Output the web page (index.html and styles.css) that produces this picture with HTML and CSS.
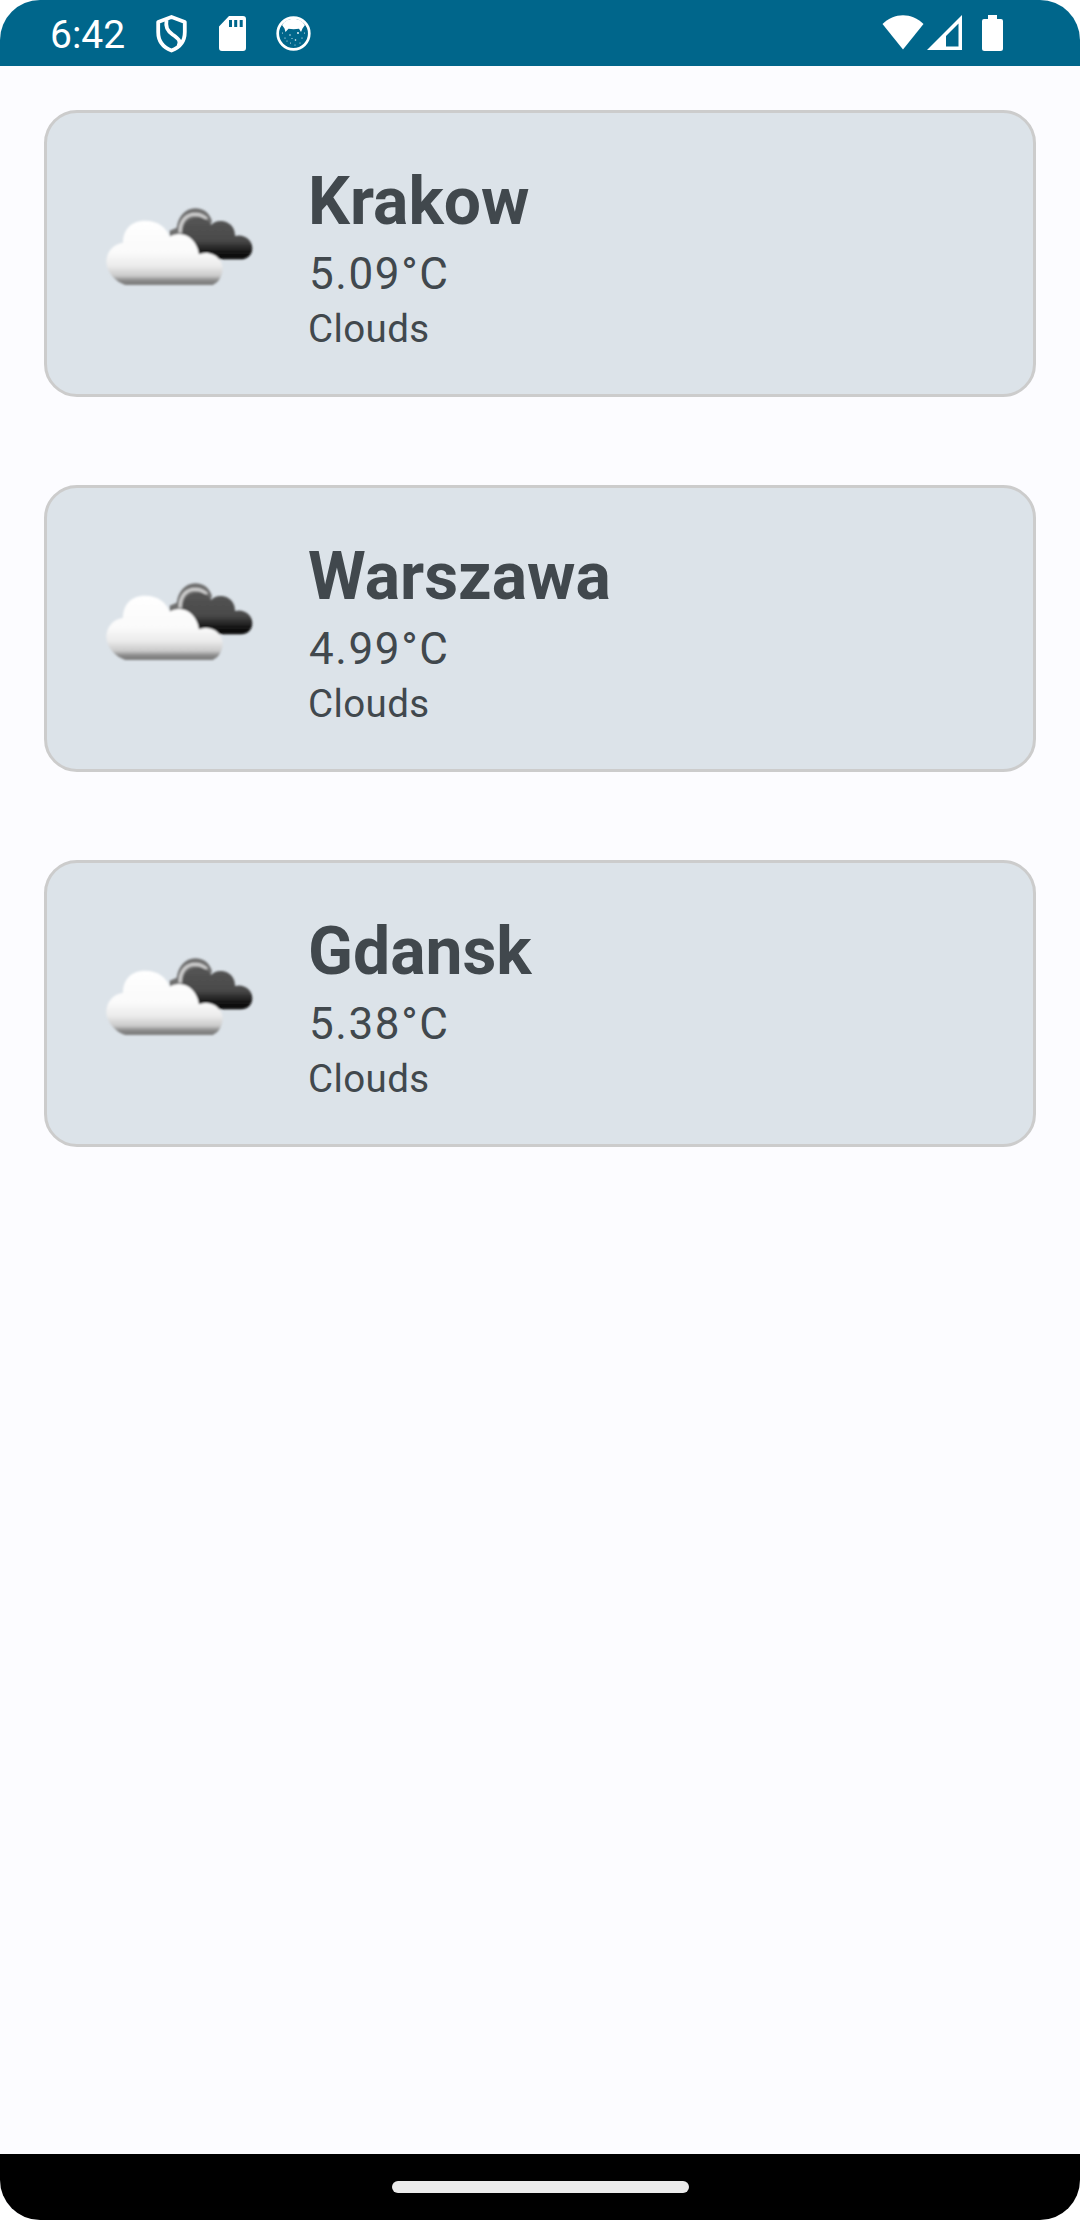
FILE: index.html
```html
<!DOCTYPE html>
<html lang="en">
<head>
<meta charset="utf-8">
<title>Weather</title>
<link rel="stylesheet" href="styles.css">
</head>
<body>
<svg class="defs" width="0" height="0" aria-hidden="true">
  <defs>
    <linearGradient id="white" x1="0" y1="90" x2="0" y2="287" gradientUnits="userSpaceOnUse">
      <stop offset="0" stop-color="#fff"/><stop offset=".5" stop-color="#fafafa"/>
      <stop offset=".7" stop-color="#ebebeb"/><stop offset=".85" stop-color="#cacaca"/>
      <stop offset=".92" stop-color="#8a8a8a"/><stop offset="1" stop-color="#777"/>
    </linearGradient>
    <linearGradient id="dark" x1="0" y1="80" x2="0" y2="210" gradientUnits="userSpaceOnUse">
      <stop offset="0" stop-color="#555"/><stop offset=".55" stop-color="#4a4a4a"/>
      <stop offset=".8" stop-color="#181818"/><stop offset="1" stop-color="#000"/>
    </linearGradient>
    <filter id="soft" x="-10%" y="-10%" width="120%" height="120%"><feGaussianBlur stdDeviation="3"/></filter>
    <symbol id="clouds" viewBox="0 0 540 330">
      <g filter="url(#soft)">
        <path d="M239 137V122L260 113C265 78 286 56 315 55C342 55 360 71 366 94L350 130L290 180Z" fill="#707070"/>
        <path d="M270 128C270 94 288 73 315 73C330 73 342 78 350 88" fill="none" stroke="#ccc" stroke-width="10"/>
        <path d="M278 130C278 98 296 83 323 83C344 83 357 91 363 105C373 94 386 91 401 94C423 99 436 117 435 138C459 131 487 147 487 174C487 194 473 208 452 208H330L278 160Z" fill="url(#dark)"/>
        <path d="M106 285C78 277 50 248 49 217C49 187 68 163 99 158C99 122 121 92 165 92C204 92 228 111 239 140C280 117 321 147 327 193C362 179 398 203 398 235C398 258 386 278 368 285Z" fill="url(#white)"/>
      </g>
    </symbol>
  </defs>
</svg>
<div class="screen">
  <header class="status">
    <span class="clock">6:42</span>
    <svg class="shield" viewBox="0 0 32 38" fill="none" stroke="#fff" stroke-width="3.8" stroke-linejoin="round">
      <path d="M15.500 2L28.800 7V17C28.800 26 23.500 32.500 15.500 35.500C7.500 32.500 2.200 26 2.200 17V7Z"/>
      <path d="M10.500 5C9.500 12 11 15.500 16.500 19.500C23 24 25 26 22.500 31"/>
    </svg>
    <svg class="sd" viewBox="0 0 27 35"><path fill="#fff" fill-rule="evenodd" d="M10 0H24Q27 0 27 3V32Q27 35 24 35H3Q0 35 0 32V10.500ZM10 4V11H13V4ZM15.200 4V11H18.200V4ZM20.700 4V11H23.700V4Z"/></svg>
    <svg class="cat" viewBox="0 0 35 35">
      <circle cx="17.500" cy="17.500" r="15.800" fill="none" stroke="#fff" stroke-width="2.700"/>
      <path fill="#fff" d="M6 9C11 .5 24 .5 29 9L26.500 12.500L25 16L23 12.800Q17.500 13.500 12.500 12.800L9.500 16L8.500 12.500Z"/>
      <g fill="#fff"><circle cx="14" cy="19" r=".7"/><circle cx="22" cy="17" r=".9"/><circle cx="19.500" cy="24" r=".8"/><circle cx="9" cy="22" r=".6"/><circle cx="14.500" cy="27" r=".5"/><circle cx="26" cy="22" r=".6"/><circle cx="16" cy="22.500" r=".5"/><circle cx="24" cy="27" r=".5"/><circle cx="6.500" cy="17" r=".5"/><circle cx="28.500" cy="17" r=".5"/><circle cx="19" cy="29" r=".5"/><circle cx="11" cy="25" r=".5"/></g>
    </svg>
    <svg class="wifi" viewBox="0 0 42 35"><path fill="#fff" d="M0.500 9C12 -2.700 30 -2.700 41.500 9L21 34.500Z"/></svg>
    <svg class="signal" viewBox="0 0 35 35"><path fill="#fff" fill-rule="evenodd" d="M35 0V35H0ZM31.500 8.500L19 21V31.500H31.500Z"/></svg>
    <svg class="battery" viewBox="0 0 21 36"><path fill="#fff" d="M6 0H15V4H19Q21 4 21 6V33.500Q21 36 18.500 36H2.500Q0 36 0 33.500V6Q0 4 2 4H6Z"/></svg>
  </header>
  <main class="cities">
    <article class="card">
      <svg class="weather"><use href="#clouds"/></svg>
      <div class="info"><h2 class="city">Krakow</h2><p class="temp">5.09°C</p><p class="sky">Clouds</p></div>
    </article>
    <article class="card">
      <svg class="weather"><use href="#clouds"/></svg>
      <div class="info"><h2 class="city">Warszawa</h2><p class="temp">4.99°C</p><p class="sky">Clouds</p></div>
    </article>
    <article class="card">
      <svg class="weather"><use href="#clouds"/></svg>
      <div class="info"><h2 class="city">Gdansk</h2><p class="temp">5.38°C</p><p class="sky">Clouds</p></div>
    </article>
  </main>
  <footer class="nav"><div class="handle"></div></footer>
</div>
</body>
</html>
```
FILE: styles.css
```css
* { box-sizing: border-box; }
body { margin: 0; background: #fff; font-family: Roboto, sans-serif; color: #41484d; }
h2, p { margin: 0; }
svg { display: block; flex: none; }
.defs { position: absolute; }
.screen {
  width: 1080px;
  height: 2220px;
  display: flex;
  flex-direction: column;
  background: #fcfcff;
  border-radius: 40px;
  overflow: hidden;
}
.status {
  height: 66px;
  flex: none;
  display: flex;
  align-items: flex-start;
  padding: 15px 77px 0 50px;
  background: #00668b;
  color: #fff;
}
.clock { width: 106px; font-size: 39px; line-height: 40px; }
.shield { width: 32px; height: 38px; margin-right: 31px; }
.sd { width: 27px; height: 35px; margin: 1px 30px 0 0; }
.cat { width: 35px; height: 35px; margin-top: 1px; }
.wifi { width: 42px; height: 35px; margin-left: auto; }
.signal { width: 35px; height: 35px; margin-left: 3px; }
.battery { width: 21px; height: 36px; margin-left: 20px; }
.cities {
  flex: 1;
  display: flex;
  flex-direction: column;
  gap: 88px;
  padding: 44px;
}
.card {
  height: 287px;
  display: flex;
  gap: 38px;
  padding: 50px 43px;
  background: #dce3e9;
  border: 3px solid #ccc;
  border-radius: 33px;
}
.weather { width: 180px; height: 110px; margin-top: 27px; }
.city { font-size: 66px; font-weight: 700; line-height: 77px; }
.temp { padding: 1px 0 0 1px; font-size: 44px; line-height: 66px; letter-spacing: 1.6px; }
.sky { font-size: 38.5px; line-height: 44px; letter-spacing: .4px; }
.nav {
  height: 66px;
  flex: none;
  display: flex;
  align-items: center;
  justify-content: center;
  background: #000;
}
.handle { width: 297px; height: 12px; border-radius: 6px; background: #ebebeb; }
```
